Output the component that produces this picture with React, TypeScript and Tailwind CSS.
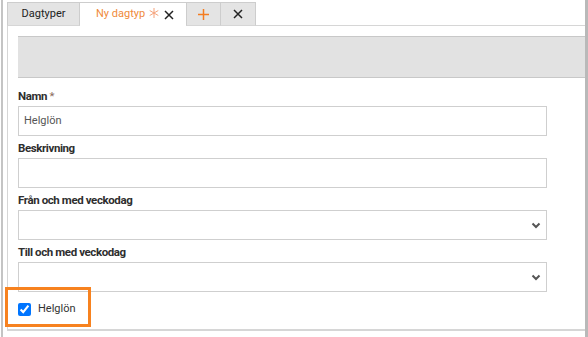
import { useState } from 'react';

const fields = [
	{ label: 'Beskrivning', value: '', select: false },
	{ label: 'Från och med veckodag', value: '', select: true },
	{ label: 'Till och med veckodag', value: '', select: true },
];

function Chevron() {
	return (
		<svg width="10" height="7" viewBox="0 0 10 7" aria-hidden="true">
			<path
				d="M1.5 1.5 L5 5 L8.5 1.5"
				fill="none"
				stroke="#555"
				strokeWidth="2"
			/>
		</svg>
	);
}

function Cross({ size = 10 }: { size?: number }) {
	return (
		<svg width={size} height={size} viewBox="0 0 10 10" aria-hidden="true">
			<path d="M1 1 L9 9 M9 1 L1 9" stroke="#222" strokeWidth="1.5" />
		</svg>
	);
}

function Field({
	label,
	value,
	select,
	required,
}: {
	label: string;
	value: string;
	select: boolean;
	required?: boolean;
}) {
	return (
		<div className="mt-[4px] first:mt-[10px]">
			<div className="mb-[2px] h-[16px] text-[11.5px] leading-[16px] font-bold tracking-[-0.4px] text-[#2e2e2e]">
				{label}
				{required && <span className="font-normal text-[#8a6a5a]"> *</span>}
			</div>
			<div className="flex h-[30px] w-[529px] items-center justify-between border border-[#cfcfcf] bg-white pl-[5px] pr-[5px]">
				<span className="text-[11px] text-[#555]">{value}</span>
				{select && <Chevron />}
			</div>
		</div>
	);
}

export default function App() {
	const [checked, setChecked] = useState(true);
	return (
		<div
			className="relative flex h-[337px] w-[588px] overflow-hidden bg-white"
			style={{ fontFamily: 'Roboto, "Liberation Sans", sans-serif' }}
		>
			<div className="ml-[1px] w-[2px] bg-[#c4c4c4]" />
			<div className="flex flex-1 flex-col pl-[4px]">
				{/* tab bar */}
				<div className="mt-[2px] flex h-[24px] items-stretch">
					<div className="flex w-[73px] items-center justify-center border border-[#cdcdcd] border-b-[#d6d6d6] bg-[#e4e4e4] text-[11px] text-[#222]">
						Dagtyper
					</div>
					<div className="flex w-[106px] items-center border-t border-[#cdcdcd] bg-white pl-[16px] text-[11px] text-[#f08a3a]">
						<span>Ny dagtyp</span>
						<svg
							width="10"
							height="10"
							viewBox="0 0 10 10"
							className="ml-[4px] mb-[3px]"
							aria-hidden="true"
						>
							<path
								d="M5 0 L5 10 M0.7 2.5 L9.3 7.5 M9.3 2.5 L0.7 7.5"
								stroke="#f5a27a"
								strokeWidth="1"
							/>
						</svg>
						<span className="ml-[5px] flex">
							<Cross size={10} />
						</span>
					</div>
					<div className="flex w-[35px] items-center justify-center border border-[#cdcdcd] border-b-[#d6d6d6] bg-[#e4e4e4]">
						<svg width="11" height="11" viewBox="0 0 11 11" aria-hidden="true">
							<path d="M5.5 0 L5.5 11 M0 5.5 L11 5.5" stroke="#f47c20" strokeWidth="1.5" />
						</svg>
					</div>
					<div className="flex w-[35px] items-center justify-center border border-l-0 border-[#cdcdcd] border-b-[#d6d6d6] bg-[#e4e4e4]">
						<Cross size={10} />
					</div>
					<div className="flex-1 border-b border-[#d6d6d6]" />
				</div>
				{/* panel */}
				<div className="flex h-[305px] flex-col border-b-2 border-l border-[#d6d6d6] pl-[10px] pt-[10px]">
					<div className="h-[42px] border-y border-[#c8c8c8] bg-[#e2e2e2]" />
					<div className="flex flex-col">
						<Field label="Namn" value="Helglön" select={false} required />
						{fields.map((f) => (
							<Field key={f.label} {...f} />
						))}
					</div>
					<label className="mt-[9px] flex items-center gap-[7px] text-[11px] text-[#333]">
						<input
							type="checkbox"
							checked={checked}
							onChange={() => setChecked(!checked)}
							className="m-0 h-[13px] w-[13px]"
						/>
						Helglön
					</label>
				</div>
			</div>
			<div className="w-[3px] bg-[#b9b9b9]" />
			{/* highlight */}
			<div className="absolute left-[5px] top-[287px] h-[40px] w-[86px] border-[3px] border-[#f7821f]" />
		</div>
	);
}
